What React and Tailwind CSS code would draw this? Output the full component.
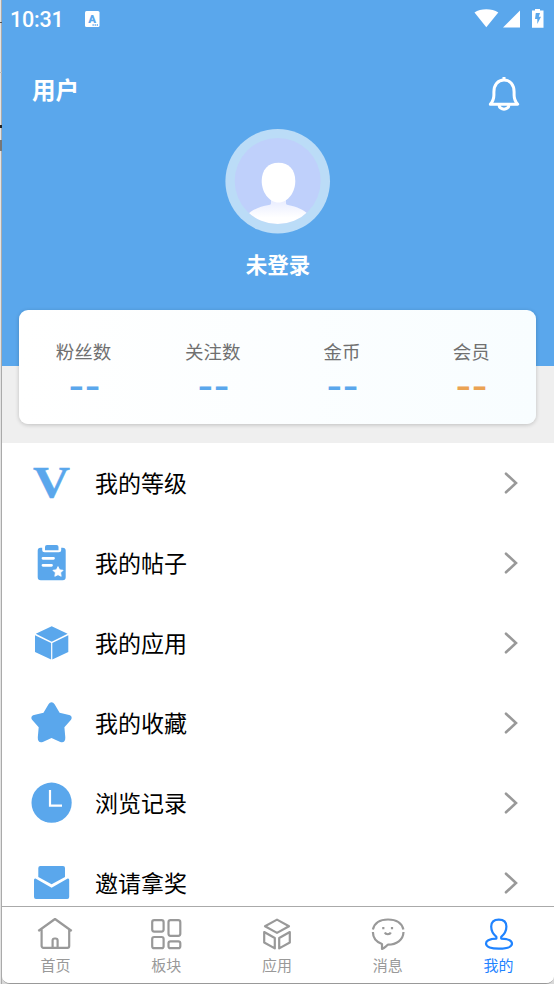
import React, { useState } from 'react';

const BLUE = '#5aa7ec';

const stats = [
  { label: '粉丝数', value: '--', color: 'text-[#5aa7ec]' },
  { label: '关注数', value: '--', color: 'text-[#5aa7ec]' },
  { label: '金币', value: '--', color: 'text-[#5aa7ec]' },
  { label: '会员', value: '--', color: 'text-[#eba353]' },
];

const menu = [
  {
    label: '我的等级',
    icon: (
      <text x="2" y="34.1" fontFamily="Liberation Serif, serif" fontWeight="bold" fontSize="44" textLength="37" lengthAdjust="spacingAndGlyphs" stroke={BLUE} strokeWidth="0.4">V</text>
    ),
  },
  {
    label: '我的帖子',
    icon: (
      <>
        <path d="M9.5 4.7h1.7v2.1a2.5 2.5 0 0 0 2.5 2.5h14a2.5 2.5 0 0 0 2.5-2.5V4.7h1.5a3 3 0 0 1 3 3v26.6a3 3 0 0 1-3 3H9.7a3 3 0 0 1-3-3V7.7a3 3 0 0 1 2.8-3z" />
        <path d="M16 2h9.5q2 0 2 2v3.2H14V4q0-2 2-2z" />
        <path d="M12 15.3h10.5M12 22.3h8.5" stroke="#fff" strokeWidth="2.8" strokeLinecap="round" />
        <path d="M27 23.6l1.6 3.2 3.5.5-2.5 2.5.6 3.5-3.2-1.6-3.2 1.6.6-3.5-2.5-2.5 3.5-.5z" fill="#fff" stroke="#fff" strokeWidth="0.8" strokeLinejoin="round" />
      </>
    ),
  },
  {
    label: '我的应用',
    icon: <path d="M20.7 3.3L36.6 10.7 20.7 18.7 4.8 10.7zM4 12.2l16.1 7.9v16.3L4 28.9zM37.3 12.2l-16 7.9v16.3l16-7.5z" />,
  },
  {
    label: '我的收藏',
    icon: (
      <path d="M23.6 1.3l5 8.4 9.5 2.2c2.6.6 3.4 3 1.7 5l-6.4 7.3.9 10c.2 4-1.8 6-5 4.8L20.5 35l-8.7 4c-3.2 1.2-5.2-.8-5-4.8l.9-10-6.4-7.3c-1.7-2-.9-4.4 1.7-5l9.5-2.2 5-8.4c1.6-2.7 4.5-2.7 6.1 0z" />
    ),
  },
  {
    label: '浏览记录',
    icon: (
      <>
        <circle cx="20.6" cy="19.7" r="20.1" />
        <path d="M19 7v15.7h12" fill="none" stroke="#fff" strokeWidth="2.2" />
      </>
    ),
  },
  {
    label: '邀请拿奖',
    icon: (
      <path d="M9.3 3h22.7a2 2 0 0 1 2 2v9L20.6 21.2 7.3 14V5a2 2 0 0 1 2-2zM4.5 15.5l16.1 9.2 16.1-9.2q1.5-.3 1.5 1.5v17a2 2 0 0 1-2 2H5a2 2 0 0 1-2-2V17q0-1.8 1.5-1.5z" />
    ),
  },
];

const tabs = [
  {
    label: '首页',
    icon: <path d="M3.3 17L20 5l16.7 12M6.6 15v17a1.8 1.8 0 0 0 1.8 1.8h24a1.8 1.8 0 0 0 1.8-1.8V15M17.6 33.5v-7q0-2 2-2h1q2 0 2 2v7" />,
  },
  {
    label: '板块',
    icon: (
      <>
        <rect x="6.2" y="6.2" width="11.4" height="11.4" rx="2" />
        <rect x="22.5" y="6.2" width="11.8" height="15.6" rx="2" />
        <rect x="6.2" y="23" width="11.4" height="11.2" rx="2" />
        <rect x="22.5" y="27.3" width="11.8" height="6.9" rx="2" />
      </>
    ),
  },
  {
    label: '应用',
    icon: <path d="M20 5.6L32 12.2 20 18.9 8 12.2zM7.2 18l10.6 6v10.4L7.200 28.500zM32.800 18l-10.600 6v10.400l10.600-5.900z" />,
  },
  {
    label: '消息',
    icon: (
      <>
        <path d="M4.9 15.5C6.5 9 12 5.500 20 5.500S33.800 9 35.400 15.500M4.900 18c0 6 3.500 10 9.100 12v5c2.500-1.200 4.500-3.300 6-4.300 8.500 0 15.200-4.700 15.500-12.700" />
        <path d="M15.300 13v2.200M24 13v2.200M16.800 18.500c1 2.300 5 2.300 6 0" />
      </>
    ),
  },
  {
    label: '我的',
    icon: (
      <path d="M17.400 24.600v-1.800c-3-2.300-5.200-6-5.200-10.200 0-5 2.500-7 7.600-7s7.600 2 7.600 7c0 4.200-2.200 7.900-5.200 10.200v1.800c6 .2 10.800 2 10.800 5 0 3.400-5.500 5-13.100 5s-12.900-1.600-12.900-5c0-3 4.400-4.800 10.400-5z" />
    ),
  },
];

function StatusBar() {
  return (
    <div className="flex h-[38px] items-center pl-2 pr-[10px] text-white">
      <span className="pt-[2px] font-['Roboto',sans-serif] text-[21.5px] font-medium leading-[38px] tracking-[-0.2px]">10:31</span>
      <svg className="ml-[21px]" width="15" height="16" viewBox="0 0 15 16">
        <rect width="14.5" height="16" rx="1.5" fill="#fff" />
        <text x="7.2" y="11.5" textAnchor="middle" fontFamily="Roboto, sans-serif" fontSize="11.5" fontWeight="900" fill={BLUE}>A</text>
        <path d="M7.5 14h6" stroke={BLUE} strokeWidth="1.3" strokeDasharray="1.3 0.8" />
      </svg>
      <svg className="ml-auto" width="70" height="20" viewBox="0 0 70 20" fill="#fff">
        <path d="M0.500 3.500C6.500-.700 18-.700 24.300 3.500L12.300 18.300z" />
        <path d="M46 1.500v17H29z" />
        <path d="M61 0h5v1.500h3.500v17.200H58V1.500h3z" />
        <path d="M61.800 4h4.200l-1.200 3.700h2.200L63.300 15v-5H61z" fill={BLUE} />
      </svg>
    </div>
  );
}

function Avatar() {
  return (
    <svg width="106" height="106" viewBox="0 0 106 106" className="shrink-0">
      <defs>
        <clipPath id="face">
          <circle cx="52.7" cy="53" r="43" />
        </clipPath>
        <linearGradient id="body" x1="0" y1="0" x2="0" y2="1">
          <stop offset="0" stopColor="#e3e8ff" />
          <stop offset="0.7" stopColor="#ffffff" />
        </linearGradient>
      </defs>
      <circle cx="52.7" cy="53.3" r="52.3" fill="#bbdcf7" />
      <circle cx="52.7" cy="53" r="43" fill="#bfd0fb" />
      <g clipPath="url(#face)">
        <path d="M46 68h15v7.500q0 1.200 2 1.500c9 1.500 16 5 21 10v12H22V87c5-5 13-8.700 22-10q2-.300 2-1.500z" fill="url(#body)" />
        <path d="M53.5 34.7c10.500 0 16.800 7 16.800 18.200S63 74.400 53.500 74.400 36.700 64 36.700 52.900 43 34.700 53.500 34.700z" fill="#fff" />
      </g>
    </svg>
  );
}

export default function App() {
  const [active, setActive] = useState(4);

  return (
    <div className="flex h-[984px] w-[554px] overflow-hidden bg-[#d8d8d8] font-['Liberation_Sans','Noto_Sans_CJK_SC',sans-serif]">
      {/* window edge */}
      <div className="flex w-[2px] shrink-0 flex-col border-r border-[#aaa] bg-[#e3e3e3]">
        <div className="mt-[22px] h-px w-[2px] bg-[#555]" />
        <div className="mt-[49px] h-px w-[2px] bg-[#bbb]" />
        <div className="mt-[52px] h-[3px] w-[2px] bg-[#222]" />
        <div className="mt-[12px] h-[11px] w-[2px] bg-[#777]" />
      </div>

      <div className="flex w-[552px] flex-col overflow-hidden rounded-b-lg border-b border-[#999] bg-white">
        <header className="flex h-[366px] shrink-0 flex-col bg-[#5aa7ec] text-white">
          <StatusBar />
          <div className="flex h-[90px] shrink-0 items-start justify-between pl-[30px] pr-[34px] pt-[38px]">
            <h1 className="pt-px text-[23.5px] font-bold leading-7">用户</h1>
            <svg width="32" height="34" viewBox="0 0 32 34" fill="none" stroke="#fff" strokeWidth="3" className="mt-px">
              <path d="M2.300 27.200c2.800-3 3.600-5 3.600-9.200v-3C5.900 7.500 10 3 16 3s10.100 4.500 10.100 12v3c0 4.200.800 6.200 3.600 9.200z" strokeLinejoin="round" />
              <path d="M16 0v3M11 28c.500 5.500 9.500 5.500 10 0" />
            </svg>
          </div>
          <div className="flex h-[182px] shrink-0 flex-col items-center">
            <Avatar />
            <span className="mt-4 text-[21.5px] font-bold leading-8">未登录</span>
          </div>
        </header>

        {/* stats card */}
        <section className="h-[77px] shrink-0 bg-[#efefef] pl-[17px] pr-[18px]">
          <div className="relative -mt-[56px] grid h-[114px] grid-cols-4 rounded-[9px] bg-linear-to-r from-white to-[#f8fdff] shadow-[0_1px_4px_rgba(0,0,0,0.2)]">
            {stats.map((item) => (
              <div key={item.label} className="flex flex-col items-center pt-[29px]">
                <span className="text-[18.5px] leading-7 text-[#707070]">{item.label}</span>
                <span className={`${item.color} ml-px mt-1 scale-x-[1.3] font-['Roboto',sans-serif] text-[32px] font-bold leading-[32px]`}>{item.value}</span>
              </div>
            ))}
          </div>
        </section>

        <main className="min-h-0 flex-1 overflow-hidden">
          {menu.map((item) => (
            <div key={item.label} className="flex h-20 cursor-pointer items-center pl-[29px] pr-9">
              <svg width="42" height="40" viewBox="0 0 42 40" fill={BLUE} className="shrink-0 overflow-visible">
                {item.icon}
              </svg>
              <span className="ml-[22px] pt-[2px] text-[23px] leading-8 text-black">{item.label}</span>
              <svg width="14" height="22" viewBox="0 0 14 22" fill="none" stroke="#999" strokeWidth="2.6" strokeLinecap="round" className="ml-auto">
                <path d="M2 1.700L12 11 2 20.300" />
              </svg>
            </div>
          ))}
        </main>

        <nav className="-ml-[2px] grid h-[77px] shrink-0 grid-cols-5 border-t border-[#aaa] bg-white">
          {tabs.map((tab, index) => (
            <button
              key={tab.label}
              onClick={() => setActive(index)}
              className={`flex cursor-pointer flex-col items-center pt-[7px] ${active === index ? 'text-[#1f83ff]' : 'text-[#999]'}`}
            >
              <svg width="40" height="40" viewBox="0 0 40 40" fill="none" stroke="currentColor" strokeWidth="2.2" strokeLinejoin="round">
                {tab.icon}
              </svg>
              <span className="text-[15px] leading-6">{tab.label}</span>
            </button>
          ))}
        </nav>
      </div>
    </div>
  );
}
